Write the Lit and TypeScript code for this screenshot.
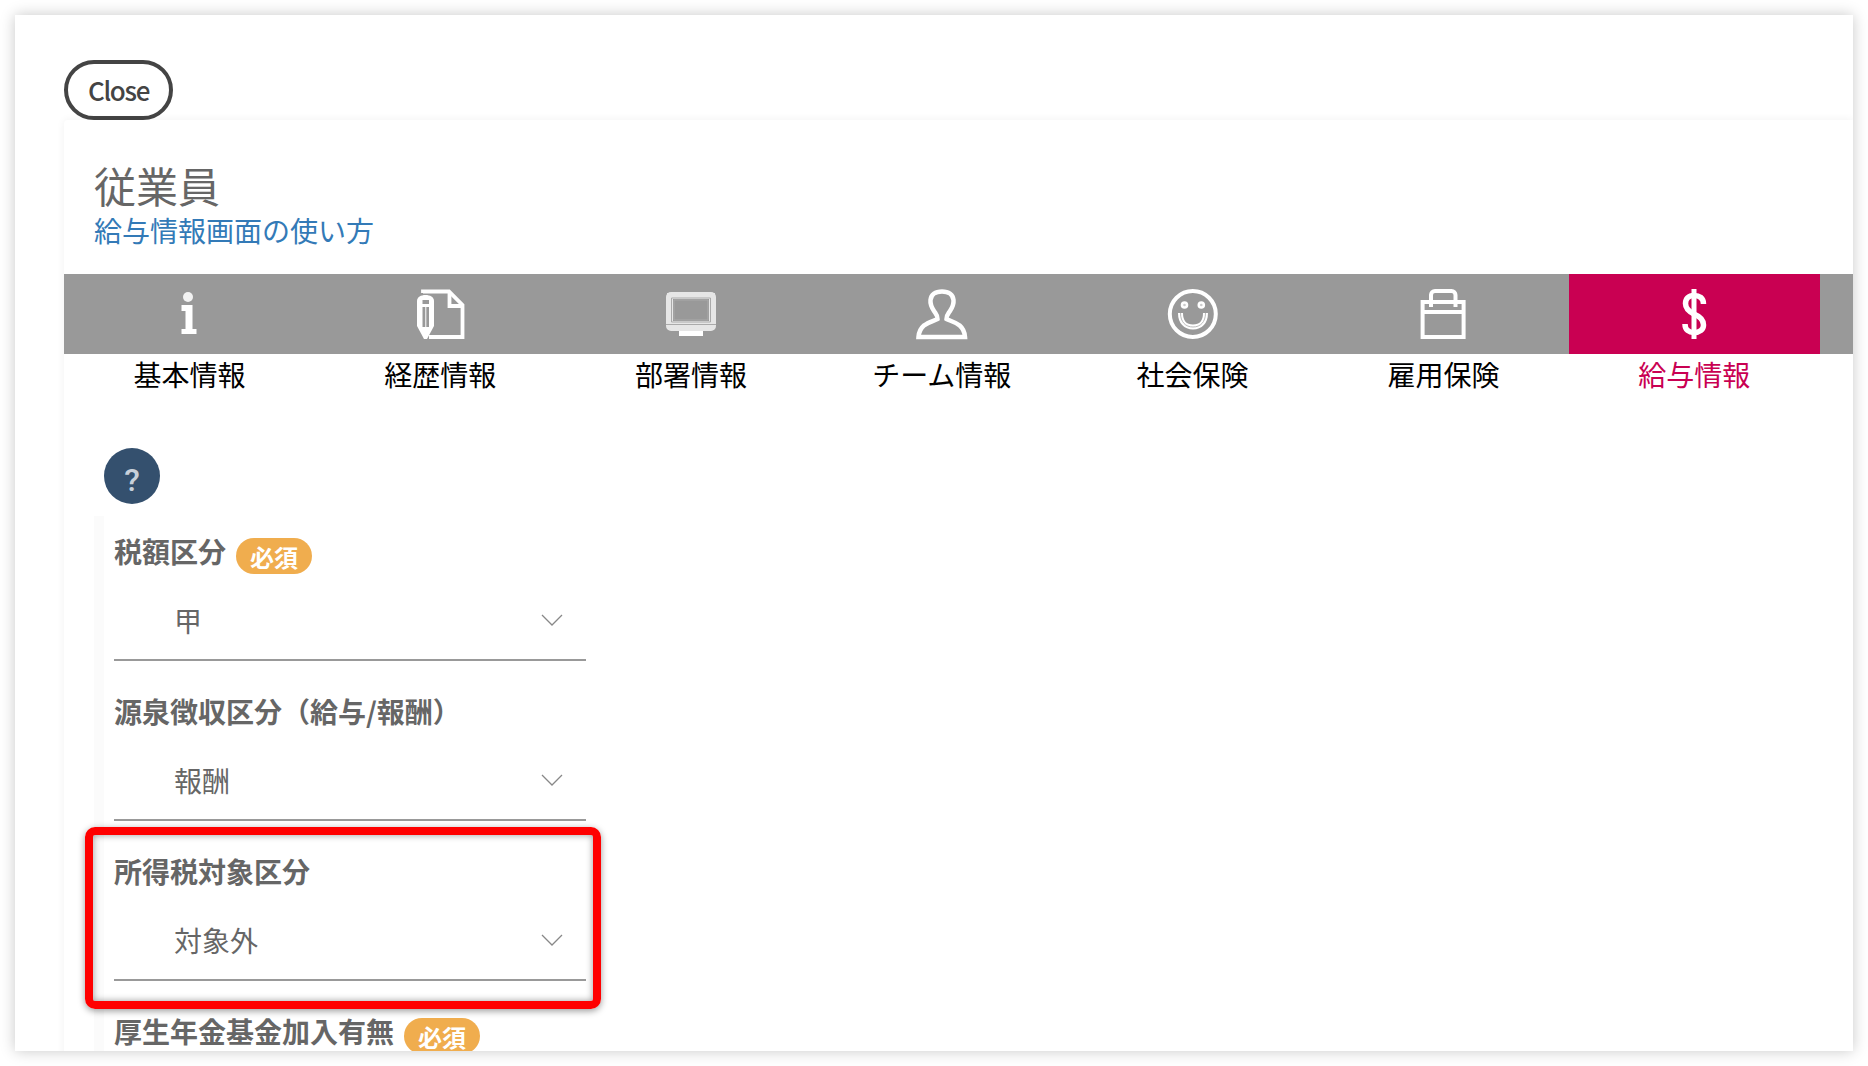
import { LitElement, html, css, svg } from "lit";
import { customElement } from "lit/decorators.js";

const W = "#fff";
const G = "#999";
const icons = [
  svg`<svg width="60" height="52" viewBox="0 0 60 52"><circle cx="29" cy="9" r="5" fill="#f2f2f2"/><path fill="${W}" d="M22.500 17h11v24h4v5h-15v-5h4V23h-4z"/></svg>`,
  svg`<svg width="60" height="52" viewBox="0 0 60 52" fill="none" stroke="${W}" stroke-width="3.800">
    <path d="M13 5V3.500H39L52.500 17V49H19"/><path d="M39.500 4V18H52"/>
    <path fill="${W}" stroke="none" d="M7 13c0-4 4-6 8.500-6s8.500 2 8.500 6V38L17 51h-3L7 38z"/>
    <path fill="${G}" stroke="none" d="M12.500 12h6.500v4h-6.500zM12.500 19h2.800v20h-2.800zM16.300 19h2.700v20h-2.700z"/></svg>`,
  svg`<svg width="60" height="52" viewBox="0 0 60 52">
    <rect x="7" y="6" width="46" height="35" rx="3" fill="none" stroke="#e6e6e6" stroke-width="4"/>
    <path d="M9 8h42v28H9z" fill="none" stroke="#e6e6e6" stroke-width="6"/>
    <rect x="15" y="13.500" width="30" height="16" fill="${G}"/>
    <path d="M10.500 10h39v24h-39zM13 12h34v20H13zM5 36.500h50" fill="none" stroke="#aaa" stroke-width="1"/>
    <path d="M18 43h24v5H18z" fill="${W}"/></svg>`,
  svg`<svg width="60" height="52" viewBox="0 0 60 52" fill="none" stroke="${W}" stroke-width="4.500"><path d="M30 3.500C23 3.500 19 7 18.500 12C18 17 20 20 22 23C24 26 25.500 27 25.500 31C20 34 7.500 35 6.500 49H53C52 35 40 34 34.500 31C34.500 27 36 26 38 23C40 20 42 17 41.500 12C41 7 37 3.500 30 3.500Z"/></svg>`,
  svg`<svg width="60" height="52" viewBox="0 0 60 52" fill="none" stroke="${W}"><circle cx="29.800" cy="26" r="23" stroke-width="4"/>
    <circle cx="21.500" cy="17" r="3.800" fill="${W}" stroke="none"/><circle cx="38.300" cy="17" r="3.800" fill="${W}" stroke="none"/>
    <circle cx="21.500" cy="17" r="1.300" fill="#ccc" stroke="none"/><circle cx="38.300" cy="17" r="1.300" fill="#ccc" stroke="none"/>
    <path d="M17.500 25c0 9 5 14 12.500 14s12.500-5 12.500-14" stroke-width="5"/>
    <path d="M17.500 25c0 9 5 14 12.500 14s12.500-5 12.500-14" stroke="#bbb" stroke-width="1"/></svg>`,
  svg`<svg width="60" height="52" viewBox="0 0 60 52" fill="none" stroke="${W}" stroke-width="4"><rect x="9.600" y="14" width="41" height="35"/><path d="M9.600 24h41M18 19V7a4 4 0 0 1 4-4h16.500a4 4 0 0 1 4 4v12"/></svg>`,
  svg`<svg width="60" height="52" viewBox="0 0 60 52" fill="none" stroke="${W}"><path d="M39.500 16C39.500 10 35.500 7.500 30 7.500C24.500 7.500 21.500 11 21.500 15.500C21.500 21 26 24 30 26C35 28 39.500 31 39.500 37C39.500 41.500 36 44.500 30 44.500C25 44.500 21 42 21 36" stroke-width="5.500"/><path d="M30 1v50" stroke-width="5"/></svg>`,
];
const tabs = ["基本情報","経歴情報","部署情報","チーム情報","社会保険","雇用保険","給与情報"];

@customElement("app-root")
export class AppRoot extends LitElement {
  static styles = css`
    :host { display: block; height: 1066px; overflow: hidden; background: #fff;
      font-family: "Noto Sans CJK JP", "Noto Sans", sans-serif; }
    .window { position: relative; margin: 15px; height: 1036px; background: #fff; overflow: hidden;
      padding: 45px 0 0 49px; box-sizing: border-box; }
    .shadow { box-shadow: 0 0 14px rgba(0,0,0,.22); }
    .close { display: block; box-sizing: border-box; width: 109px; height: 60px; border: 4.500px solid #444; border-radius: 30px;
      background: #fff; color: #444; font: 500 26px/50px "Noto Sans CJK JP", sans-serif; letter-spacing: -1.300px; padding: 0; text-align: center; }
    .panel { height: 100%; box-shadow: 0 0 8px rgba(0,0,0,.06); border-radius: 4px 0 0 0; }
    .head { height: 154px; padding: 39px 0 0 30px; box-sizing: border-box; }
    h1 { margin: 0; font-weight: 400; font-size: 42px; line-height: 52px; color: #666; }
    .link { display: block; margin-top: -1px; font-size: 28px; line-height: 40px; color: #337ab7; text-decoration: none; }
    .tabs { display: flex; background: linear-gradient(#999,#999) 0 0/100% 80px no-repeat; }
    .tab { width: 250.800px; display: flex; flex-direction: column; align-items: center; color: #000; font-size: 28px; line-height: 40px; }
    .ic { height: 80px; width: 100%; display: flex; align-items: center; justify-content: center; }
    .active { color: #c90052; }
    .active .ic { background: #c90052; }
    .help { width: 56px; height: 56px; margin: 54px 0 0 40px; border-radius: 50%; background: #34506e; color: #c8d0da;
      font: 500 32px/64px Roboto, sans-serif; text-align: center; }
    .form { margin: 12px 0 0 30px; border-left: 10px solid #fbfbfb; padding-left: 10px; width: 472px; }
    .field { height: 160px; box-sizing: border-box; padding-top: 12px; }
    .label { display: flex; align-items: center; gap: 10px; font-size: 28px; line-height: 42px; font-weight: 700; color: #666; white-space: nowrap; height: 46px; }
    .badge { width: 76px; height: 36px; border-radius: 18px; background: #f0ad4e; color: #fff; font-size: 24px; line-height: 38px; text-align: center; margin-top: 9px; }
    .select { display: flex; align-items: center; justify-content: space-between; height: 87px; box-sizing: border-box; padding: 6px 23px 0 60px;
      border-bottom: 2px solid #999; font-size: 28px; color: #666; }
    .red { position: absolute; left: 70px; top: 812px; width: 516px; height: 182px; box-sizing: border-box; border: 8px solid #f00; border-radius: 10px;
      box-shadow: 0 2px 7px rgba(0,0,0,.4), inset 0 0 7px rgba(0,0,0,.4); }
  `;
  field(label: string, value: string, req: boolean) {
    return html`<div class="field"><div class="label">${label}${req ? html`<span class="badge">必須</span>` : ""}</div>
      <div class="select"><span>${value}</span><svg width="22" height="12" viewBox="0 0 22 12" fill="none" stroke="#888" stroke-width="1.300"><path d="M1 1l10 10l10-10"/></svg></div></div>`;
  }
  render() {
    return html`<div class="window shadow">
      <button class="close">Close</button>
      <div class="panel">
        <div class="head"><h1>従業員</h1><a class="link">給与情報画面の使い方</a></div>
        <div class="tabs">${tabs.map((t, i) => html`<div class="tab ${i === 6 ? "active" : ""}"><div class="ic">${icons[i]}</div>${t}</div>`)}</div>
        <div class="help">?</div>
        <div class="form">
          ${this.field("税額区分", "甲", true)}
          ${this.field("源泉徴収区分（給与/報酬）", "報酬", false)}
          ${this.field("所得税対象区分", "対象外", false)}
          ${this.field("厚生年金基金加入有無", "", true)}
        </div>
      </div>
      <div class="red"></div>
    </div>`;
  }
}
